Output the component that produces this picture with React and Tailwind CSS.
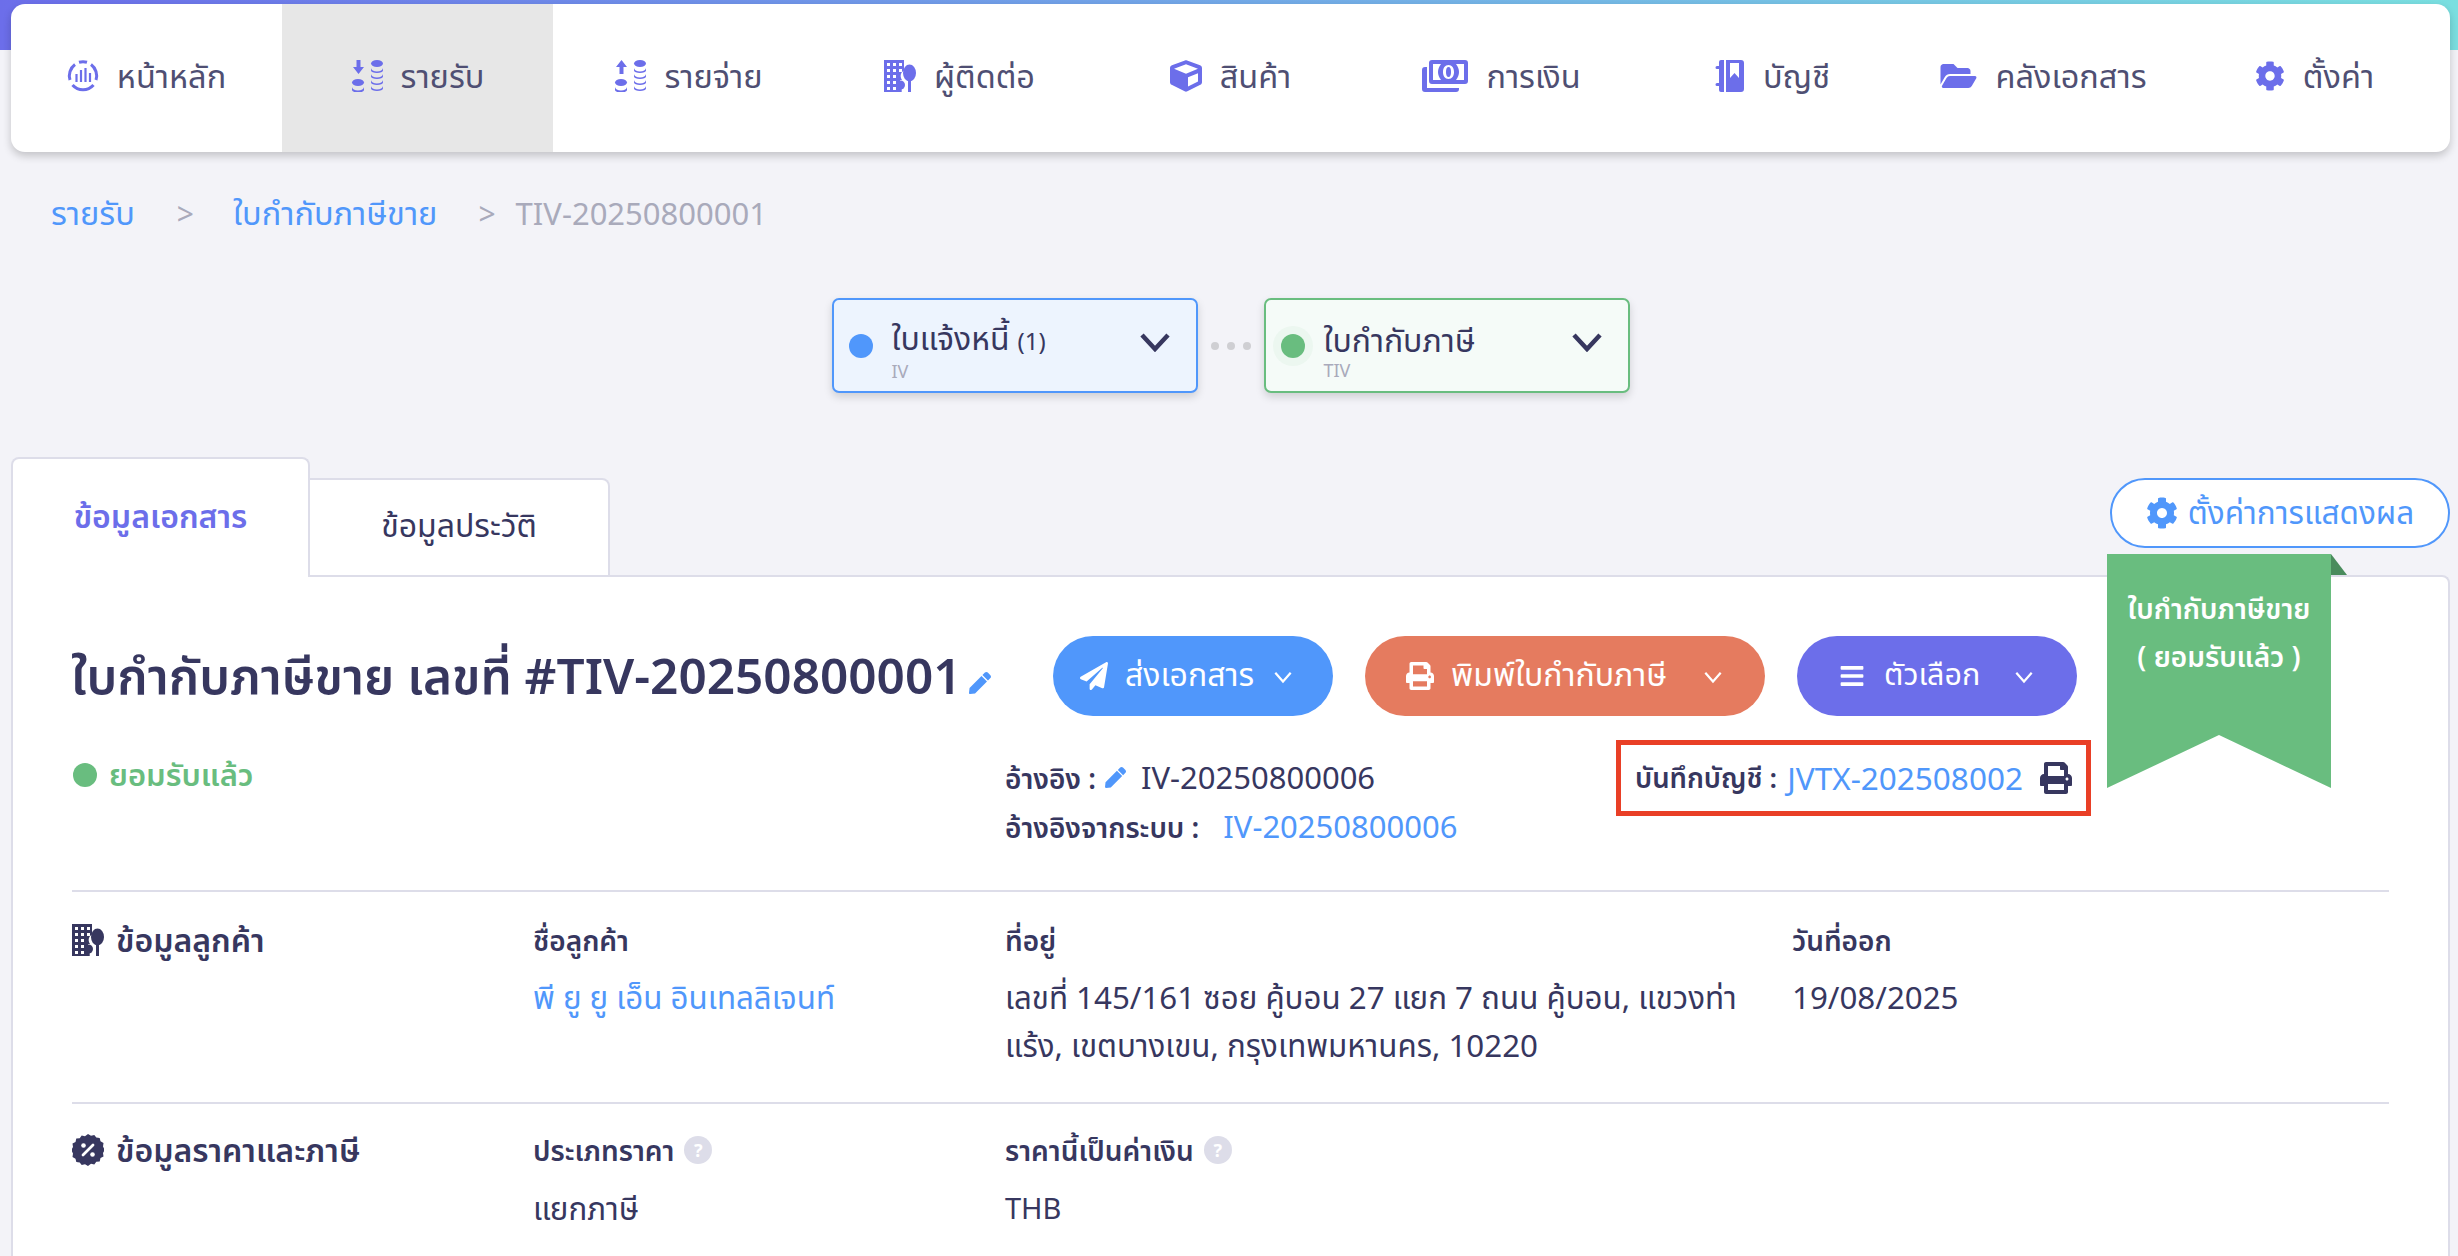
import React from "react";
import { FaCube, FaCog, FaFolderOpen, FaPrint, FaPaperPlane, FaPen, FaBars } from "react-icons/fa";

const HomeIcon = ({ className }) => (
  <svg viewBox="0 0 32 32" className={className} fill="none" stroke="currentColor">
    <path d="M3 20A14 14 0 0 1 8 4.500" strokeWidth="3" />
    <path d="M12 2.300A14 14 0 0 1 20 2.300" strokeWidth="3" />
    <path d="M24 4.500A14 14 0 0 1 29 20" strokeWidth="3" />
    <path d="M5.500 25A14 14 0 0 0 26.500 25" strokeWidth="3" />
    <path d="M9.500 14V22M14 10V22M18.500 8V22M23 13V22" strokeWidth="2.200" />
  </svg>
);

const Coins = ({ up }) => (
  <>
    {up ? (
      <path d="M7.500 0L13 7H9.500V14H5.500V7H2Z" fill="currentColor" />
    ) : (
      <path d="M5.500 0H9.500V7H13L7.500 14L2 7H5.500Z" fill="currentColor" />
    )}
    <ellipse cx="7" cy="22.500" rx="6" ry="3.500" fill="currentColor" />
    <path d="M1 27a6 3.500 0 0 0 12 0v3a6 2.500 0 0 1-12 0z" fill="currentColor" />
    <ellipse cx="26" cy="3.500" rx="6" ry="3.500" fill="currentColor" />
    <path d="M20 8a6 3.500 0 0 0 12 0v2.500a6 2.500 0 0 1-12 0zM20 14a6 3.500 0 0 0 12 0v2.500a6 2.500 0 0 1-12 0zM20 20a6 3.500 0 0 0 12 0v2.500a6 2.500 0 0 1-12 0zM20 26a6 3.500 0 0 0 12 0v2.500a6 2.500 0 0 1-12 0z" fill="currentColor" />
  </>
);
const CoinIcon = ({ up, className }) => (
  <svg viewBox="0 0 32 32" className={className}><Coins up={up} /></svg>
);

const BuildingIcon = ({ className }) => (
  <svg viewBox="0 0 32 32" className={className} fill="currentColor">
    <path fillRule="evenodd" d="M0 0H20V10.500C16 13 16 17 18 20H16V32H0ZM3 3V6H6V3ZM9 3V6H12V3ZM15 3V6H18V3ZM3 9V12H6V9ZM9 9V12H12V9ZM15 9V12H18V9ZM3 15V18H6V15ZM9 15V18H12V15ZM3 21V24H6V21ZM9 21V24H12V21ZM3 27V30H6V27ZM9 27V30H12V27Z" />
    <ellipse cx="25.500" cy="13" rx="6.500" ry="8.500" />
    <rect x="24" y="18" width="3" height="14" />
    <circle cx="16.500" cy="25" r="4.500" />
    <rect x="15.300" y="27" width="2.400" height="5" />
  </svg>
);

const BookIcon = ({ className }) => (
  <svg viewBox="0 0 30 32" className={className} fill="currentColor">
    <path d="M4 2a2 2 0 0 1 2-2h3v32H6a2 2 0 0 1-2-2v-4H2a1.500 1.500 0 0 1 0-3h2V9H2a1.500 1.500 0 0 1 0-3h2Z" />
    <path fillRule="evenodd" d="M11 0H26a3 3 0 0 1 3 3V29a3 3 0 0 1-3 3H11ZM15 3V18L19.500 13L24 18V3Z" />
  </svg>
);

const MoneyIcon = ({ className }) => (
  <svg viewBox="0 0 46 32" className={className} fill="currentColor">
    <path d="M0 10a3 3 0 0 1 3-3h2v21h32v1a3 3 0 0 1-3 3H3a3 3 0 0 1-3-3Z" />
    <path fillRule="evenodd" d="M10 0H43a3 3 0 0 1 3 3V21a3 3 0 0 1-3 3H10a3 3 0 0 1-3-3V3a3 3 0 0 1 3-3ZM11 4V20H19C17 17 16 15 16 12S17 7 19 4ZM34 4C36 7 37 9 37 12S36 17 34 20H42V4ZM26.500 5C23 5 21 8 21 12S23 19 26.500 19S32 16 32 12S30 5 26.500 5Z" />
    <ellipse cx="26.500" cy="12" rx="2.500" ry="5" />
  </svg>
);

const BadgePercent = ({ className }) => (
  <svg viewBox="0 0 32 32" className={className}>
    <path fill="currentColor" d="M16 0l3 1.700 3.300-.8 2 2.700 3.400.4.800 3.300 3 1.700-.5 3.400L32.800 16l-1.800 3 .5 3.400-3 1.700-.8 3.300-3.400.4-2 2.700-3.300-.8L16 32l-3-1.700-3.300.8-2-2.700-3.400-.4-.8-3.300-3-1.700.5-3.400L-.800 16 1 13l-.5-3.400 3-1.700.8-3.300 3.400-.4 2-2.700 3.300.8Z" />
    <path d="M21 11L11 21" stroke="#fff" strokeWidth="2.800" strokeLinecap="round" />
    <circle cx="11.500" cy="11.500" r="2.300" fill="#fff" />
    <circle cx="20.500" cy="20.500" r="2.300" fill="#fff" />
  </svg>
);

const navItems = [
  { label: "หน้าหลัก", icon: <HomeIcon className="w-[32px] h-[32px]" /> },
  { label: "รายรับ", icon: <CoinIcon className="w-[32px] h-[32px]" />, active: true },
  { label: "รายจ่าย", icon: <CoinIcon up className="w-[32px] h-[32px]" /> },
  { label: "ผู้ติดต่อ", icon: <BuildingIcon className="w-[32px] h-[32px]" /> },
  { label: "สินค้า", icon: <FaCube className="w-[32px] h-[32px]" /> },
  { label: "การเงิน", icon: <MoneyIcon className="w-[46px] h-[32px]" /> },
  { label: "บัญชี", icon: <BookIcon className="w-[30px] h-[32px]" /> },
  { label: "คลังเอกสาร", icon: <FaFolderOpen className="w-[37px] h-[32px]" /> },
  { label: "ตั้งค่า", icon: <FaCog className="w-[30px] h-[32px]" /> },
];

const Help = () => (
  <span className="inline-flex items-center justify-center w-[28px] h-[28px] rounded-full bg-[#dddde9] text-white text-[18px] font-bold leading-none">?</span>
);

const StageBox = ({ dot, bg, border, title, small, sub, halo }) => (
  <div className={`w-[366px] h-[95px] rounded-[7px] border-[2px] flex items-center pl-[15px] pr-[26px] shadow-[0_4px_8px_rgba(0,0,0,0.15)] ${bg} ${border}`}>
    <span className={`w-[24px] h-[24px] rounded-full shrink-0 ${dot} ${halo ? "shadow-[0_0_0_8px_rgba(105,189,127,0.06)]" : ""}`} />
    <div className="ml-[19px] flex-1 flex flex-col">
      <span className="text-[32px] leading-[40px] text-[#37375f] mt-[8px]">
        {title}
        {small && <span className="text-[24px] ml-[8px]">{small}</span>}
      </span>
      <span className="text-[18px] leading-[20px] text-[#a9aabb]">{sub}</span>
    </div>
    <svg viewBox="0 0 30 20" className="w-[30px] h-[20px] text-[#37375f] mb-[8px]" fill="none" stroke="currentColor" strokeWidth="4.500"><path d="M2 3L15 17L28 3" /></svg>
  </div>
);

const Btn = ({ w, bg, pl, icon, label, size, gap, chevGap }) => (
  <button className={`h-[80px] rounded-full text-white flex items-center justify-start ${w} ${bg} ${pl}`}>
    {icon}
    <span className={`pb-[4px] ${size} ${gap}`}>{label}</span>
    <svg viewBox="0 0 20 20" className={`w-[22px] h-[22px] ${chevGap}`} fill="none" stroke="currentColor" strokeWidth="2"><path d="M3 7L10 15L17 7" /></svg>
  </button>
);

export default function App() {
  return (
    <div className="relative w-full h-[1256px] overflow-hidden bg-[#f3f3f8] font-['Noto_Sans','Noto_Sans_Thai','Open_Sans',sans-serif] text-[#37375f]">
      <div className="absolute left-0 right-0 top-0 h-[50px] bg-gradient-to-r from-[#6c6eea] to-[#7adfe0]" />

      <nav className="relative mx-[8px] ml-[11px] mt-[4px] h-[148px] rounded-[14px] bg-white shadow-[0_4px_8px_rgba(0,0,0,0.2)] grid grid-cols-9 overflow-hidden">
        {navItems.map((it) => (
          <div key={it.label} className={`flex items-center justify-center gap-[18px] pb-[4px] ${it.active ? "bg-[#e7e7e7]" : ""}`}>
            <span className="text-[#6c6eea] flex">{it.icon}</span>
            <span className="text-[32.500px] text-[#4f4f73]">{it.label}</span>
          </div>
        ))}
      </nav>

      <div className="mt-[41px] h-[40px] pl-[51px] flex items-center text-[32.500px] text-[#a9aabb]">
        <span className="text-[#5097fb]">รายรับ</span>
        <span className="ml-[42px] text-[30px]">&gt;</span>
        <span className="ml-[39px] text-[#5097fb]">ใบกำกับภาษีขาย</span>
        <span className="ml-[41px] text-[30px]">&gt;</span>
        <span className="ml-[20px] text-[31px]">TIV-20250800001</span>
      </div>

      <div className="mt-[65px] flex justify-center items-center pl-[3px]">
        <StageBox dot="bg-[#5097fb]" bg="bg-[#edf4fe]" border="border-[#5097fb]" title="ใบแจ้งหนี้" small="(1)" sub="IV" />
        <div className="w-[66px] flex justify-center gap-[8px]">
          <span className="w-[8px] h-[8px] rounded-full bg-[#cfcfd3]" />
          <span className="w-[8px] h-[8px] rounded-full bg-[#cfcfd3]" />
          <span className="w-[8px] h-[8px] rounded-full bg-[#cfcfd3]" />
        </div>
        <StageBox dot="bg-[#69bd7f]" bg="bg-[#f5fbf8]" border="border-[#69bd7f]" title="ใบกำกับภาษี" sub="TIV" halo />
      </div>

      <div className="relative z-10 mt-[64px] mr-[8px] ml-[11px] h-[120px] flex items-end">
        <div className="w-[299px] h-[120px] bg-white border-[2px] border-b-0 border-[#dddde9] rounded-t-[8px] flex items-center justify-center pb-[4px] font-semibold text-[32px] text-[#6c6eea]">ข้อมูลเอกสาร</div>
        <div className="w-[300px] h-[99px] bg-white border-[2px] border-l-0 border-[#dddde9] rounded-tr-[8px] flex items-center justify-center pb-[6px] text-[32px]">ข้อมูลประวัติ</div>
        <button className="ml-auto self-start mt-[21px] w-[340px] h-[70px] rounded-[35px] bg-white border-[2px] border-[#5097fb] text-[#5097fb] flex items-center justify-center gap-[10px] pb-[3px] text-[31.500px]">
          <FaCog className="w-[32px] h-[32px] mt-[3px]" />
          ตั้งค่าการแสดงผล
        </button>
      </div>

      <div className="mt-[-2px] ml-[11px] mr-[8px] h-[700px] bg-white border-[2px] border-b-0 border-[#dddde9] rounded-tr-[8px] rounded-tl-none">
        <div className="pl-[58px] pt-[59px] flex items-center">
          <div className="w-[982px] flex items-center">
            <h1 className="text-[49.500px] font-semibold whitespace-nowrap text-[#37375f] pb-[2px]">ใบกำกับภาษีขาย เลขที่ #TIV-20250800001</h1>
            <FaPen className="ml-[7px] mt-[14px] w-[22px] h-[22px] text-[#5097fb]" />
          </div>
          <div className="flex gap-[32px]">
            <Btn w="w-[280px]" bg="bg-[#5097fb]" pl="pl-[27px]" size="text-[32px]" icon={<FaPaperPlane className="w-[28px] h-[28px]" />} label="ส่งเอกสาร" gap="ml-[17px]" chevGap="ml-[18px]" />
            <Btn w="w-[400px]" bg="bg-[#e57b5f]" pl="pl-[41px]" size="text-[32px]" icon={<FaPrint className="w-[28px] h-[28px]" />} label="พิมพ์ใบกำกับภาษี" gap="ml-[17px]" chevGap="ml-[35px]" />
            <Btn w="w-[280px]" bg="bg-[#6c6eea]" pl="pl-[43px]" size="text-[30.500px]" icon={<FaBars className="w-[24px] h-[26px]" />} label="ตัวเลือก" gap="ml-[20px]" chevGap="ml-[33px]" />
          </div>
        </div>

        <div className="pl-[58px] mt-[24px] flex items-start">
          <div className="w-[934px] pt-[14px] flex items-center gap-[12px] text-[#69bd7f] font-semibold text-[31px] leading-[40px]">
            <span className="ml-[2px] w-[24px] h-[24px] rounded-full bg-[#69bd7f] mt-[2px]" />
            ยอมรับแล้ว
          </div>
          <div className="w-[611px] mt-[13px] text-[31px]">
            <div className="h-[49px] flex items-center">
              <span className="text-[28px] font-semibold">อ้างอิง :</span>
              <FaPen className="ml-[9px] w-[21px] h-[21px] text-[#5097fb]" />
              <span className="ml-[15px]">IV-20250800006</span>
            </div>
            <div className="h-[49px] flex items-center">
              <span className="text-[28px] font-semibold">อ้างอิงจากระบบ :</span>
              <span className="ml-[24px] text-[#5097fb]">IV-20250800006</span>
            </div>
          </div>
          <div className="w-[475px] h-[76px] border-[5px] border-[#e93f26] flex items-center pl-[14px] text-[31.500px]">
            <span className="text-[27.500px] font-semibold whitespace-nowrap">บันทึกบัญชี :</span>
            <span className="ml-[10px] text-[#5097fb]">JVTX-202508002</span>
            <FaPrint className="ml-[17px] w-[32px] h-[32px] text-[#37375f]" />
          </div>
        </div>

        <div className="mx-[59px] mt-[39px]">
          <div className="border-t-[2px] border-[#dddde9] pt-[24px] pb-[33px] grid grid-cols-[461px_472px_787px_1fr]">
            <div className="flex items-center gap-[12px] h-[48px] text-[32px] font-semibold">
              <BuildingIcon className="w-[32px] h-[32px]" />
              ข้อมูลลูกค้า
            </div>
            <div>
              <div className="h-[48px] leading-[48px] text-[28px] font-semibold">ชื่อลูกค้า</div>
              <div className="mt-[9px] leading-[48px] text-[31.300px] text-[#5097fb]">พี ยู ยู เอ็น อินเทลลิเจนท์</div>
            </div>
            <div>
              <div className="h-[48px] leading-[48px] text-[28px] font-semibold">ที่อยู่</div>
              <div className="mt-[9px] leading-[48px] text-[31.300px] whitespace-nowrap">เลขที่ 145/161 ซอย คู้บอน 27 แยก 7 ถนน คู้บอน, แขวงท่า<br />แร้ง, เขตบางเขน, กรุงเทพมหานคร, 10220</div>
            </div>
            <div>
              <div className="h-[48px] leading-[48px] text-[28px] font-semibold">วันที่ออก</div>
              <div className="mt-[9px] leading-[48px] text-[31.300px]">19/08/2025</div>
            </div>
          </div>
          <div className="border-t-[2px] border-[#dddde9] pt-[22px] grid grid-cols-[461px_472px_787px_1fr]">
            <div className="flex items-center gap-[12px] h-[48px] text-[32px] font-semibold">
              <BadgePercent className="w-[32px] h-[32px]" />
              ข้อมูลราคาและภาษี
            </div>
            <div>
              <div className="h-[48px] flex items-center gap-[10px] text-[28px] font-semibold">ประเภทราคา <Help /></div>
              <div className="mt-[10px] leading-[48px] text-[31.300px]">แยกภาษี</div>
            </div>
            <div>
              <div className="h-[48px] flex items-center gap-[10px] text-[28px] font-semibold">ราคานี้เป็นค่าเงิน <Help /></div>
              <div className="mt-[10px] leading-[48px] text-[29px]">THB</div>
            </div>
            <div />
          </div>
        </div>
      </div>

      <div className="absolute left-[2107px] top-[554px] w-[224px] h-[234px] z-20 bg-[#69bd7f] [clip-path:polygon(0_0,100%_0,100%_100%,50%_77.400%,0_100%)] text-white font-semibold text-[28px] text-center pt-[30px] leading-[48px]">
        <div>ใบกำกับภาษีขาย</div>
        <div>( ยอมรับแล้ว )</div>
      </div>
      <div className="absolute left-[2331px] top-[554px] w-[16px] h-[21px] z-20 bg-[#4a8c5d] [clip-path:polygon(0_0,100%_100%,0_100%)]" />
    </div>
  );
}
